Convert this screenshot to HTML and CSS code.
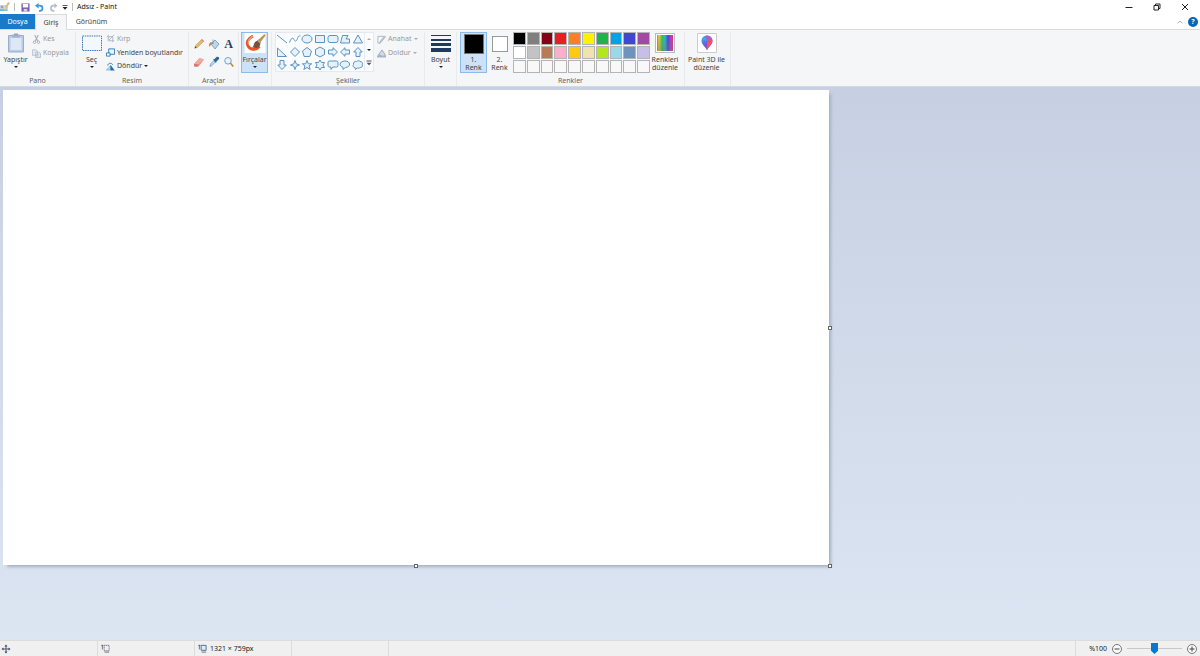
FILE: index.html
```html
<!DOCTYPE html>
<html lang="tr">
<head>
<meta charset="utf-8">
<title>Adsız - Paint</title>
<link rel="stylesheet" href="styles.css">
</head>
<body>
<div class="window">
  <header class="titlebar">
    <svg class="app-icon" viewBox="0 0 10 12"><path d="M0 4h8v6H0z" fill="#b7dcef"/><path d="M0 8h7v2H0z" fill="#78b9dc"/><circle cx="2" cy="6" r="1.2" fill="#d88a6e"/><circle cx="5" cy="8" r="1.2" fill="#e9cc74"/><path d="M5 6 8 1l2 1-3.500 5z" fill="#d9b98a"/></svg>
    <span class="divider"></span>
    <button class="quick save" aria-label="Kaydet"><svg viewBox="0 0 10 10"><path d="M.5.5h9v9h-9z" fill="#7a5aa6"/><path d="M2 1h6v4H2z" fill="#fff"/><path d="M3 6.500h4v3H3z" fill="#d8ccea"/></svg></button>
    <button class="quick undo" aria-label="Geri al"><svg viewBox="0 0 10 10"><path d="M2 3h3.500a2.600 2.600 0 0 1 0 5.700H4.500" fill="none" stroke="#3f96d4" stroke-width="2"/><path d="M0 3 4 0v6z" fill="#3f96d4"/></svg></button>
    <button class="quick redo" aria-label="Yinele"><svg viewBox="0 0 10 10"><path d="M7.500 3H5a2.600 2.600 0 0 0 0 5.700h1" fill="none" stroke="#b4bfcd" stroke-width="2"/><path d="M9.500 3 6 0v6z" fill="#b4bfcd"/></svg></button>
    <button class="quick more" aria-label="Hızlı erişim"><svg viewBox="0 0 6 6"><path d="M.5 1.500h5" stroke="#333" stroke-width=".8"/><path d="M.5 3h5L3 5.700z" fill="#222"/></svg></button>
    <span class="divider"></span>
    <h1 class="title">Adsız - Paint</h1>
    <div class="window-buttons">
      <button aria-label="Simge durumuna küçült"><svg viewBox="0 0 8 8"><path d="M.5 4.500h7" stroke="#222"/></svg></button>
      <button aria-label="Önceki boyut"><svg viewBox="0 0 8 8"><path d="M1 2.500h4.500V7H1zM2.500 2.500V1H7v4.500H5.500" fill="none" stroke="#222"/></svg></button>
      <button aria-label="Kapat"><svg viewBox="0 0 8 8"><path d="m1 1 6 6M7 1 1 7" stroke="#222"/></svg></button>
    </div>
  </header>

  <nav class="tabs">
    <button class="tab file">Dosya</button>
    <button class="tab active">Giriş</button>
    <button class="tab view">Görünüm</button>
    <button class="collapse" aria-label="Şeridi daralt"><svg viewBox="0 0 6 6"><path d="m.5 4.200 2.500-2 2.500 2" fill="none" stroke="#999" stroke-width=".8"/></svg></button>
    <button class="help" aria-label="Yardım">?</button>
  </nav>

  <main class="ribbon">
    <section class="group pano">
      <div class="body">
        <button class="big"><svg class="pic" viewBox="0 0 18 20"><path d="M1.500 2.500h15v16.500h-15z" fill="#bccbe5" stroke="#9cadcc"/><path d="M3.500 5h11v12h-11z" fill="#dde8f7"/><path d="M5 1.500h8v3H5z" fill="#a5b4ce"/><path d="M7 .5h4v2H7z" fill="#94a3be"/></svg><span>Yapıştır</span><i class="arrow"></i></button>
        <div class="stack">
          <button class="small off"><svg viewBox="0 0 10 10"><path d="m3 0 3.500 7M7 0 3.500 7" stroke="#a4adb9" stroke-width="1.200"/><circle cx="2.800" cy="8" r="1.400" fill="none" stroke="#a4adb9"/><circle cx="7.200" cy="8" r="1.400" fill="none" stroke="#a4adb9"/></svg>Kes</button>
          <button class="small off"><svg viewBox="0 0 10 10"><path d="M.5 1h4l1.500 1.500V7H.5zM4 3.500h3.500L9.500 5v4.500H4z" fill="#e6ecf5" stroke="#b4c0d2"/><path d="M5 6h3M5 8h3" stroke="#b4c0d2" stroke-width=".7"/></svg>Kopyala</button>
        </div>
      </div>
      <h2>Pano</h2>
    </section>

    <section class="group resim">
      <div class="body">
        <button class="big"><svg class="pic" viewBox="0 0 20 20"><path d="M.5 3h19v14.500H.5z" fill="#f3f8fd" stroke="#3e78b8" stroke-dasharray="1.500 .8"/></svg><span>Seç</span><i class="arrow"></i></button>
        <div class="stack">
          <button class="small off"><svg viewBox="0 0 10 10"><path d="M2.500 1v6.500H9M1 3h6.500v6M3 7l6-6" fill="none" stroke="#a9b4c2"/></svg>Kırp</button>
          <button class="small"><svg viewBox="0 0 10 10"><path d="M3 1h6.500v6H3z" fill="#e8f4fd" stroke="#2878b8"/><path d="M.5 5.500h4v3.500h-4z" fill="#fff" stroke="#2878b8"/></svg>Yeniden boyutlandır</button>
          <button class="small"><svg viewBox="0 0 10 10"><path d="M.5 9 5 4v5z" fill="#b9daf0" stroke="#6aa5cc" stroke-width=".7"/><path d="M5 3 9.700 9.500H5z" fill="#1f6fae"/><path d="M2 4C2 1 6 .5 7.500 3" fill="none" stroke="#2878b8"/></svg>Döndür <i class="arrow"></i></button>
        </div>
      </div>
      <h2>Resim</h2>
    </section>

    <section class="group araclar">
      <div class="body tools">
        <button aria-label="Kalem"><svg viewBox="0 0 12 12"><path d="m2 10 .7-2.600 6-6L10.600 3.300l-6 6z" fill="#e8bd62" stroke="#b9954d" stroke-width=".6"/><path d="m1.500 10.500.8-2.200 1.400 1.400z" fill="#444"/><path d="m8 2 2 2 1-1-2-2z" fill="#d98b80"/></svg></button>
        <button aria-label="Dolgu"><svg viewBox="0 0 12 12"><path d="m3 6 4-4 4 4-4 5z" fill="#b9d8ee" stroke="#6598bd" stroke-width=".8"/><path d="M1.500 9C0 5 3 3 6 5L3 6.500z" fill="#e27548"/><path d="M5 6V1.500" stroke="#6598bd" stroke-width=".8"/></svg></button>
        <button class="text-tool" aria-label="Metin">A</button>
        <button aria-label="Silgi"><svg viewBox="0 0 12 12"><path d="M1 8 6.500 2 11 3.500 6 10l-4.500.5z" fill="#e98f86"/><path d="m1 8 4 .5L11 3.500 6.500 2z" fill="#f2aaa0"/><path d="m1 8 4 .5.5 2-4 .2z" fill="#cf7570"/></svg></button>
        <button aria-label="Renk seçici"><svg viewBox="0 0 12 12"><path d="M2 10.500 2.500 8 6 4.500 7.500 6 4 9.500z" fill="#b9dcf4" stroke="#5c86ad" stroke-width=".6"/><path d="m5 3.500 1.500-.5 2-2c1.500-1 3.500.7 2.500 2l-2.500 2.500L8 7z" fill="#28679f"/></svg></button>
        <button aria-label="Büyüteç"><svg viewBox="0 0 12 12"><circle cx="5" cy="4.800" r="3.300" fill="#e4f3fd" stroke="#7c9fc0"/><path d="m7.300 7 3 3.500" stroke="#bd8740" stroke-width="1.600"/></svg></button>
      </div>
      <h2>Araçlar</h2>
    </section>

    <section class="group fircalar">
      <button class="big selected"><svg class="pic wide" viewBox="0 0 22 20"><path d="M.5 0h21v20H.5z" fill="#fff"/><path d="M9 3C5 5 1.500 9 4 13c2.500 4.500 8 4.500 11.500.5" fill="none" stroke="#e4572b" stroke-width="2.800"/><path d="M9 3C6 5 3.500 8 4.500 11" fill="none" stroke="#f4a080" stroke-width="1.200"/><path d="m13 8 7.500-7 1 1.500-6 8z" fill="#c6904e"/><path d="m11 9 2.500-1.500 3 3-1 3C13 16 10 14.500 8 14.500c2-1 1.500-3.500 3-5.500z" fill="#795039"/><path d="m13 7.500 3 3 1-1-2.500-3z" fill="#9ba8ae"/></svg><span>Fırçalar</span><i class="arrow"></i></button>
    </section>

    <section class="group sekiller">
      <div class="body">
        <div class="gallery">
          <div class="shapes">
            <button aria-label="Çizgi"><svg viewBox="0 0 12 12"><path d="m1 2 10 8"/></svg></button>
            <button aria-label="Eğri"><svg viewBox="0 0 12 12"><path d="M.5 9.500C2 5 4 4 5 6.500s2.500 2 3.500-1S9.500 3 11.500 3"/></svg></button>
            <button aria-label="Oval"><svg viewBox="0 0 12 12"><ellipse cx="6" cy="6" rx="5" ry="4"/></svg></button>
            <button aria-label="Dikdörtgen"><svg viewBox="0 0 12 12"><path d="M1.500 2.500h9v7h-9z"/></svg></button>
            <button aria-label="Yuvarlatılmış dikdörtgen"><svg viewBox="0 0 12 12"><rect x="1" y="2.500" width="10" height="7" rx="2"/></svg></button>
            <button aria-label="Çokgen"><svg viewBox="0 0 12 12"><path d="M3.500 2.500h5.500L7 6h3.500v4H1.500z"/></svg></button>
            <button aria-label="Üçgen"><svg viewBox="0 0 12 12"><path d="m6 2 4.500 8h-9z"/></svg></button>
            <button aria-label="Dik üçgen"><svg viewBox="0 0 12 12"><path d="M1.500 2v8.500h9z"/></svg></button>
            <button aria-label="Elmas"><svg viewBox="0 0 12 12"><path d="m6 1.500 4.500 4.500L6 10.500 1.500 6z"/></svg></button>
            <button aria-label="Beşgen"><svg viewBox="0 0 12 12"><path d="m6 1.500 4.500 3.500-1.700 5.500H3.200L1.500 5z"/></svg></button>
            <button aria-label="Altıgen"><svg viewBox="0 0 12 12"><path d="m6 1 4.500 2.500v5L6 11 1.500 8.500v-5z"/></svg></button>
            <button aria-label="Sağ ok"><svg viewBox="0 0 12 12"><path d="M1.500 4H6V1.700L10.500 6 6 10.300V8H1.500z"/></svg></button>
            <button aria-label="Sol ok"><svg viewBox="0 0 12 12"><path d="M10.500 4H6V1.700L1.500 6 6 10.300V8h4.500z"/></svg></button>
            <button aria-label="Yukarı ok"><svg viewBox="0 0 12 12"><path d="M4 10.500V6H1.700L6 1.500 10.300 6H8v4.500z"/></svg></button>
            <button aria-label="Aşağı ok"><svg viewBox="0 0 12 12"><path d="M4 1.500V6H1.700L6 10.500 10.300 6H8V1.500z"/></svg></button>
            <button aria-label="Dört köşeli yıldız"><svg viewBox="0 0 12 12"><path d="m6 1.500 1.200 3.300L10.500 6 7.200 7.200 6 10.500 4.800 7.200 1.500 6l3.300-1.200z"/></svg></button>
            <button aria-label="Beş köşeli yıldız"><svg viewBox="0 0 12 12"><path d="m6 1.500 1.300 3.300h3.400L8 7l1.200 3.500L6 8.500l-3.200 2L4 7 1.300 4.800h3.400z"/></svg></button>
            <button aria-label="Altı köşeli yıldız"><svg viewBox="0 0 12 12"><path d="m6 1 1.500 2.500h3L9 6l1.500 2.500h-3L6 11 4.500 8.500h-3L3 6 1.500 3.500h3z"/></svg></button>
            <button aria-label="Yuvarlak konuşma balonu"><svg viewBox="0 0 12 12"><path d="M2.500 2h7q1.500 0 1.500 1.500v3Q11 8 9.500 8H6l-2 2.500V8H2.500Q1 8 1 6.500v-3Q1 2 2.500 2z"/></svg></button>
            <button aria-label="Oval konuşma balonu"><svg viewBox="0 0 12 12"><path d="M4 8.300C-.5 7 .5 2 6 2s6.500 6 .5 6.500L4 10.500z"/></svg></button>
            <button aria-label="Bulut"><svg viewBox="0 0 12 12"><path d="M3 8.500C.5 8.500 1 6 1.500 5.500 1 3 3 2 4.500 2.500c1-1 3-1 3.500 0 2 0 3 1.500 2.300 3 1 2-1 3-2 3C7 9.500 5.500 9 5 9l-1.500 1.500z"/></svg></button>
          </div>
          <div class="scroll">
            <button aria-label="Yukarı"><i class="arrow up"></i></button>
            <button aria-label="Aşağı"><i class="arrow"></i></button>
            <button aria-label="Tümü"><svg viewBox="0 0 6 6"><path d="M.5 1h5" stroke="#555"/><path d="M.5 2.700h5L3 5.200z" fill="#555"/></svg></button>
          </div>
        </div>
        <div class="stack">
          <button class="small off"><svg viewBox="0 0 10 10"><path d="M8 1.500H1v7.500h3" fill="none" stroke="#a9b4c2"/><path d="m3 9 1-2.500L8.500 1l1 1L5 7.500z" fill="#c4ccd7" stroke="#929eae" stroke-width=".6"/></svg>Anahat <i class="arrow"></i></button>
          <button class="small off"><svg viewBox="0 0 10 10"><path d="m2 6 3.500-5L9 6v2H2z" fill="#cfd9e6" stroke="#8799b3" stroke-width=".8"/><path d="M0 9.500h10V7L6 8 2 5.500 0 8z" fill="#a5b3c8"/></svg>Doldur <i class="arrow"></i></button>
        </div>
      </div>
      <h2>Şekiller</h2>
    </section>

    <section class="group boyut">
      <button class="big"><svg class="pic wide" viewBox="0 0 22 20"><path d="M1 2.500h20" stroke="#1e3a60"/><path d="M1 7h20" stroke="#1e3a60" stroke-width="2"/><path d="M1 11.500h20" stroke="#1e3a60" stroke-width="3"/><path d="M1 17h20" stroke="#1e3a60" stroke-width="4"/></svg><span>Boyut</span><i class="arrow"></i></button>
    </section>

    <section class="group renkler">
      <div class="body">
        <button class="big selected color"><b class="swatch black"></b><span>1.<br>Renk</span></button>
        <button class="big color second"><b class="swatch white"></b><span>2.<br>Renk</span></button>
        <div class="palette">
          <button class="c-black" aria-label="Siyah"></button><button class="c-gray" aria-label="Gri"></button><button class="c-maroon" aria-label="Koyu kırmızı"></button><button class="c-red" aria-label="Kırmızı"></button><button class="c-orange" aria-label="Turuncu"></button><button class="c-yellow" aria-label="Sarı"></button><button class="c-green" aria-label="Yeşil"></button><button class="c-turquoise" aria-label="Turkuaz"></button><button class="c-indigo" aria-label="Çivit mavisi"></button><button class="c-purple" aria-label="Mor"></button>
          <button class="c-white" aria-label="Beyaz"></button><button class="c-silver" aria-label="Açık gri"></button><button class="c-brown" aria-label="Kahverengi"></button><button class="c-rose" aria-label="Gül"></button><button class="c-gold" aria-label="Altın"></button><button class="c-cream" aria-label="Açık sarı"></button><button class="c-lime" aria-label="Misket limonu"></button><button class="c-sky" aria-label="Açık turkuaz"></button><button class="c-steel" aria-label="Mavi gri"></button><button class="c-lavender" aria-label="Lavanta"></button>
          <button aria-label="Özel 1"></button><button aria-label="Özel 2"></button><button aria-label="Özel 3"></button><button aria-label="Özel 4"></button><button aria-label="Özel 5"></button><button aria-label="Özel 6"></button><button aria-label="Özel 7"></button><button aria-label="Özel 8"></button><button aria-label="Özel 9"></button><button aria-label="Özel 10"></button>
        </div>
        <button class="big edit"><b class="rainbow"></b><span>Renkleri<br>düzenle</span></button>
      </div>
      <h2>Renkler</h2>
    </section>

    <section class="group paint3d">
      <button class="big"><svg class="pic" viewBox="0 0 20 20"><defs><linearGradient id="drop" x1="0" x2="1" y1="0" y2="1"><stop offset="0" stop-color="#31b6e8"/><stop offset=".5" stop-color="#7557d5"/><stop offset="1" stop-color="#e3387c"/></linearGradient></defs><path d="M.5.5h19v19H.5z" fill="#fff" stroke="#ccc"/><path d="M10 17.500C9 14 4.500 12 4.500 8a5.500 5.500 0 0 1 11 0c0 4-4.500 6-5.500 9.500z" fill="url(#drop)"/><path d="M10 8.500 15 6c2 4-3 6-5 11.500z" fill="#ee5366"/><path d="M10 8.500 8 3c3-1.500 6 0 7 3z" fill="#b45bc8"/><path d="M5 6c1-2 2-3 3-3l2 5.500z" fill="#31aef0"/></svg><span>Paint 3D ile<br>düzenle</span></button>
    </section>
  </main>

  <div class="workspace">
    <div class="canvas"><i class="handle right"></i><i class="handle bottom"></i><i class="handle corner"></i></div>
  </div>

  <footer class="status">
    <div class="cell position"><svg viewBox="0 0 10 10"><path d="M5 1v8M1 5h8" stroke="#4a5570"/><path d="m3.500 2.500 1.500-2 1.500 2zM3.500 7.500l1.500 2 1.500-2zM2.500 3.500.5 5l2 1.500zM7.500 3.500l2 1.500-2 1.500z" fill="#4a5570"/></svg></div>
    <div class="cell selection"><svg viewBox="0 0 10 10"><path d="M1.500 1v5M.5 2l1-1 1 1M4 9h5" fill="none" stroke="#445" stroke-width=".8"/><path d="M3.500 1.500h5.500V7.500H3.500z" fill="none" stroke="#556" stroke-dasharray="1.500 .5" stroke-width=".8"/></svg></div>
    <div class="cell size"><svg viewBox="0 0 10 10"><path d="M3.500 1.500h5.500v5.500H3.500z" fill="#dcecf9" stroke="#45658c"/><path d="M1.500 1v5M.5 2l1-1 1 1M4 9h5" fill="none" stroke="#445" stroke-width=".8"/></svg>1321 × 759px</div>
    <div class="cell file-size"></div>
    <div class="zoom">
      <label for="zoom">%100</label>
      <button aria-label="Uzaklaştır"><svg viewBox="0 0 12 12"><circle cx="6" cy="6" r="4.500" fill="#fafafa" stroke="#777"/><path d="M3.500 6h5" stroke="#444"/></svg></button>
      <input id="zoom" type="range" min="0" max="100" value="50">
      <button aria-label="Yakınlaştır"><svg viewBox="0 0 12 12"><circle cx="6" cy="6" r="4.500" fill="#fafafa" stroke="#777"/><path d="M3.500 6h5M6 3.500v5" stroke="#444"/></svg></button>
    </div>
  </footer>
</div>
</body>
</html>
```

FILE: styles.css
```css
* { box-sizing: border-box; }
body { margin: 0; font: 7px/8px "Noto Sans", "Open Sans", sans-serif; color: #444; }
button { display: flex; align-items: center; justify-content: center; margin: 0; padding: 0; border: 0; background: none; color: inherit; font: inherit; }
svg { display: block; flex: none; }
h1, h2 { margin: 0; font: inherit; }
.window { display: flex; flex-direction: column; min-height: 100vh; background: #fff; }

.titlebar { display: flex; align-items: center; height: 14px; }
.app-icon { width: 10px; height: 12px; }
.divider { width: 1px; height: 8px; background: #bbb; }
.app-icon + .divider { margin: 0 6px 0 4px; }
.quick svg { width: 9px; height: 9px; }
.quick { margin-right: 5px; }
.quick.more { margin-right: 4px; }
.quick.redo { margin-right: 4px; }
.quick.more svg { width: 6px; height: 6px; }
.title { margin-left: 4px; color: #111; }
.window-buttons { display: flex; margin-left: auto; padding-right: 1px; }
.window-buttons button { width: 28px; height: 13px; }
.window-buttons svg { width: 8px; height: 8px; }

.tabs { display: flex; height: 15px; padding-right: 2px; }
.tab { height: 15px; width: 32px; }
.tab.file { width: 35px; background: #1979ca; color: #fff; }
.tab.active { height: 16px; background: #f5f6f7; border: 1px solid #dadbdc; border-bottom: 0; z-index: 1; }
.tab.view { width: 49px; }
.collapse { margin-left: auto; width: 10px; margin-right: 3px; }
.collapse svg { width: 6px; height: 6px; }
.help { align-self: center; width: 10px; height: 10px; border-radius: 50%; background: #0a64b4; color: #fff; font-weight: bold; }

.ribbon { display: flex; height: 58px; padding-top: 2px; background: #f5f6f7; border-top: 1px solid #dadbdc; border-bottom: 1px solid #d4dae2; }
.group { display: flex; flex-direction: column; height: 54px; border-right: 1px solid #e9eaec; }
.group h2 { margin-top: auto; padding-bottom: 1px; text-align: center; color: #666; }
.body { display: flex; height: 41px; }
.big { flex-direction: column; justify-content: flex-start; height: 41px; border: 1px solid transparent; white-space: nowrap; }
.big .pic { width: 20px; height: 20px; }
.big .pic.wide { width: 22px; }
.big > span { padding-top: 3px; }
.big .arrow { margin-top: 2px; }
.arrow { width: 0; height: 0; border: 2px solid transparent; border-top-color: #222; border-bottom: 0; }
.arrow.up { border-bottom: 2px solid #aaa; border-top: 0; }
.selected { background: #cbe2f8; border-color: #8bbbe8; }
.stack { display: flex; flex-direction: column; align-items: flex-start; }
.small { height: 14px; gap: 2px; white-space: nowrap; }
.small svg { width: 9px; height: 9px; }
.off { color: #999; }
.off .arrow { border-top-color: #aaa; }

.pano { width: 76px; }
.pano .body { padding-left: 3px; gap: 4px; }
.pano .big { width: 25px; }
.resim { width: 113px; }
.resim .body { padding-left: 4px; gap: 3px; }
.resim .big { width: 23px; }
.araclar { width: 50px; }
.tools { display: grid; grid-template-columns: repeat(3, 15px); justify-content: center; padding: 3px 0 2px; }
.tools svg { width: 12px; height: 12px; }
.text-tool { color: #1d3f66; font: bold 12px/12px "Liberation Serif", serif; }
.fircalar { width: 33px; padding-left: 2px; }
.fircalar .big { width: 27px; }
.sekiller { width: 153px; }
.sekiller .body { padding-left: 3px; gap: 3px; }
.gallery { display: flex; height: 40px; border: 1px solid #e6eaf0; background: #fafcfe; }
.shapes { display: grid; grid-template-columns: repeat(7, 1fr); width: 88px; }
.shapes svg { width: 12px; height: 12px; fill: #e6f2fb; stroke: #5a93c4; stroke-width: 1; }
.shapes button:nth-child(-n+2) svg { fill: none; }
.scroll { display: grid; width: 9px; border-left: 1px solid #e8ebef; }
.scroll svg { width: 6px; height: 6px; }
.boyut { width: 32px; }
.renkler { width: 228px; }
.renkler .body { padding-left: 3px; }
.color { width: 27px; }
.color.second { width: 25px; }
.swatch { margin-top: 1px; width: 20px; height: 20px; border: 1px solid #777; }
.second .swatch { width: 16px; height: 16px; margin: 3px 0 2px; border-color: #999; }
.black { background: #000; }
.white { background: #fff; }
.color > span { padding-top: 2px; }
.palette { display: grid; grid-template-columns: repeat(10, 1fr); gap: 1px; width: 137px; height: 41px; margin-left: 1px; }
.palette button { border: 1px solid #b4b4b4; background: #f8f8f8; }
.edit { width: 30px; }
.rainbow { width: 20px; height: 20px; border: 1px solid #bbb; outline: 1px solid #fff; outline-offset: -2px; background: linear-gradient(transparent, #7777), linear-gradient(90deg, #e83b2e, #e6dd35, #34c64b, #29b7df, #4043d8, #d62fc5, #e42e4c); }
.paint3d { width: 46px; }
.paint3d .big { width: 43px; }

.palette .c-black { background: #000; }
.palette .c-gray { background: #7f7f7f; }
.palette .c-maroon { background: #880015; }
.palette .c-red { background: #ed1c24; }
.palette .c-orange { background: #ff7f27; }
.palette .c-yellow { background: #fff200; }
.palette .c-green { background: #22b14c; }
.palette .c-turquoise { background: #00a2e8; }
.palette .c-indigo { background: #3f48cc; }
.palette .c-purple { background: #a349a4; }
.palette .c-white { background: #fff; }
.palette .c-silver { background: #c3c3c3; }
.palette .c-brown { background: #b97a57; }
.palette .c-rose { background: #ffaec9; }
.palette .c-gold { background: #ffc90e; }
.palette .c-cream { background: #efe4b0; }
.palette .c-lime { background: #b5e61d; }
.palette .c-sky { background: #99d9ea; }
.palette .c-steel { background: #7092be; }
.palette .c-lavender { background: #c8bfe7; }

.workspace { flex: 1; padding: 3px; background: linear-gradient(#c6d0e2, #dce5f2); }
.canvas { position: relative; width: 826px; height: 475px; background: #fff; box-shadow: 3px 3px 3px -1px #a2b0c4; }
.handle { position: absolute; width: 4px; height: 4px; border: 1px solid #666; background: #fff; }
.handle.right { right: -3px; top: calc(50% - 2px); }
.handle.bottom { left: calc(50% - 2px); bottom: -3px; }
.handle.corner { right: -3px; bottom: -3px; }

.status { display: flex; height: 16px; background: #f0f0f0; border-top: 1px solid #dcdcdc; color: #222; }
.cell { display: flex; align-items: center; width: 97px; gap: 3px; padding-left: 3px; border-right: 1px solid #dcdcdc; }
.cell svg { width: 9px; height: 9px; }
.cell.position { width: 98px; padding-left: 1px; }
.cell.position svg { width: 10px; height: 10px; }
.zoom { display: flex; align-items: center; gap: 4px; margin-left: auto; padding: 0 2px 0 13px; border-left: 1px solid #dcdcdc; }
.zoom svg { width: 12px; height: 12px; }
.zoom input { width: 55px; height: 12px; margin: 0; appearance: none; background: linear-gradient(#c8c8c8, #c8c8c8) center / 100% 1px no-repeat; }
.zoom input::-webkit-slider-thumb { appearance: none; width: 7px; height: 11px; background: #0078d7; clip-path: polygon(0 0, 100% 0, 100% 70%, 50% 100%, 0 70%); }
```
